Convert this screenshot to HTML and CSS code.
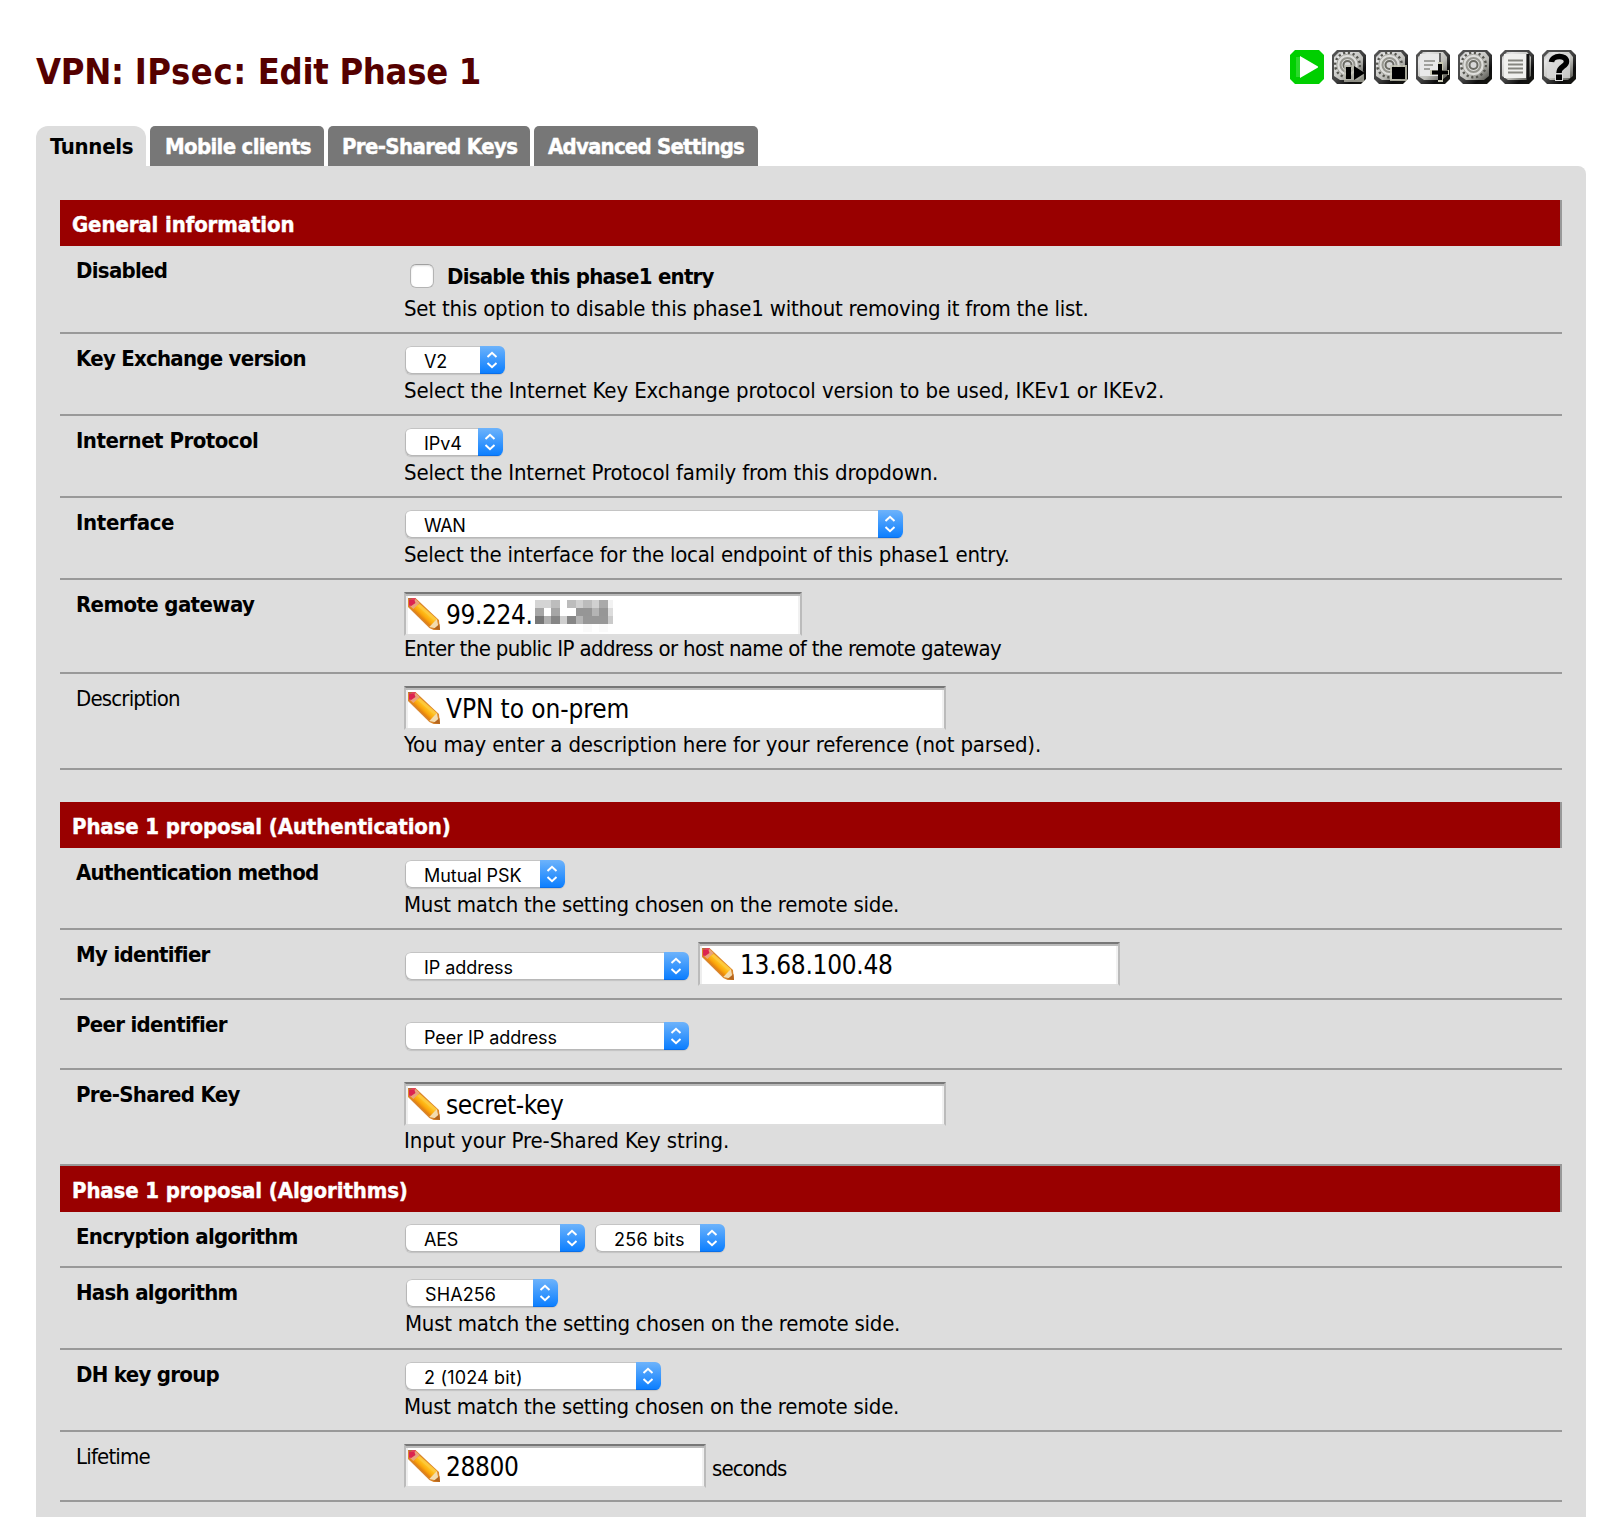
FILE: index.html
```html
<!DOCTYPE html>
<html lang="en">
<head>
<meta charset="utf-8">
<title>VPN: IPsec: Edit Phase 1</title>
<link rel="stylesheet" href="styles.css">
</head>
<body>
<svg width="0" height="0" class="defs" aria-hidden="true">
  <defs>
    <linearGradient id="metal" x1="0" y1="0" x2="1" y2="1">
      <stop offset="0" stop-color="#a9aaa8"/><stop offset=".18" stop-color="#e6e6e6"/><stop offset=".6" stop-color="#bdbdb8"/><stop offset="1" stop-color="#50504a"/>
    </linearGradient>
    <linearGradient id="rim" x1="0" y1="0" x2="1" y2="1">
      <stop offset="0" stop-color="#555"/><stop offset=".5" stop-color="#444"/><stop offset=".75" stop-color="#0c0c0c"/><stop offset="1" stop-color="#1a1a14"/>
    </linearGradient>
    <linearGradient id="wood" gradientUnits="userSpaceOnUse" x1="11" y1="19" x2="19" y2="11">
      <stop offset="0" stop-color="#e07a10"/><stop offset=".3" stop-color="#fba70c"/><stop offset=".6" stop-color="#ffc21e"/><stop offset="1" stop-color="#e98d2b"/>
    </linearGradient>
    <symbol id="tile" viewBox="0 0 34 34">
      <path d="M5 0H29L34 5V29L29 34H5L0 29V5Z" fill="url(#rim)"/>
      <path d="M7 2H27L31 7V26L26 30H8L2 26V7Z" fill="url(#metal)"/>
    </symbol>
    <symbol id="gear" viewBox="0 0 34 34">
      <circle cx="15.500" cy="15" r="12.300" fill="none" stroke="#55554f" stroke-width="2.500" stroke-dasharray="2.200 2.630"/>
      <circle cx="15.500" cy="15" r="10.700" fill="#dededb" stroke="#a4a49e" stroke-width="1"/>
      <circle cx="15.500" cy="15" r="7" fill="none" stroke="#96968f" stroke-width="2"/>
      <circle cx="15.500" cy="15" r="4" fill="#d8d8d8" stroke="#6a6a63" stroke-width="2"/>
    </symbol>
    <symbol id="pencil" viewBox="0 0 30 32" preserveAspectRatio="none">
      <path d="M0 0H7L29 22L30 32H24L20 30L0 9Z" fill="#d9862c"/>
      <path d="M7 2L28 22L21 29L1 8Z" fill="url(#wood)"/>
      <path d="M11 6L27 21L25 23L9 8Z" fill="#fdc83c"/>
      <path d="M27 21L29 31L20 29Z" fill="#f3dcae"/>
      <path d="M29.500 26L30 32L24 31Z" fill="#b5651d"/>
      <path d="M1 0H7L8.500 4L4 9L1 8Z" fill="#e2425a"/>
      <path d="M7 1L11 5L5 11L2 8Z" fill="#e9a37c"/>
      <path d="M1 2H6L7 5L3 8L1 7Z" fill="#dc2350"/>
      <path d="M0 0H4L2 2Z" fill="#b06a3c"/>
    </symbol>
    <symbol id="chevrons" viewBox="0 0 25 28">
      <path d="M7.500 11L12 6.800L16.500 11M7.500 17L12 21.200L16.500 17" fill="none" stroke="#fff" stroke-width="2"/>
    </symbol>
  </defs>
</svg>

<header class="top">
  <h1 class="title">VPN: <span class="title-part">IPsec:</span> Edit Phase 1</h1>
  <nav class="actions">
    <svg class="action" viewBox="0 0 34 34"><path d="M5 0H29L34 5V29L29 34H5L0 29V5Z" fill="#00cf00"/><path d="M6 7H10V27H6Z" fill="#2bd82b"/><path d="M10 6L28 16.500V17.500L10 28Z" fill="#fff"/></svg>
    <svg class="action" viewBox="0 0 34 34"><use href="#tile"/><use href="#gear"/><path d="M12 15H21L32 22V32H12Z" fill="#b9b9ae" opacity=".75"/><path d="M14 17H19V29H14ZM22 16L33 23L22 30Z" fill="#000"/></svg>
    <svg class="action" viewBox="0 0 34 34"><use href="#tile"/><use href="#gear"/><path d="M16 15H33V31H16Z" fill="#c9c9b8" opacity=".8"/><path d="M18 17H31V29H18Z" fill="#000"/></svg>
    <svg class="action" viewBox="0 0 34 34"><use href="#tile"/><path d="M4 4H25V26H4Z" fill="#e9e9e9"/><path d="M8 11H19M8 15H17M8 19H14" stroke="#8b8b85" stroke-width="1.500"/><path d="M24 3V13" stroke="#666" stroke-width="2"/><path d="M22 12H27V20H33V25H27V32H22V25H14V20H22Z" fill="#c9c9b4"/><path d="M16 22.500H32M24 14V30" stroke="#000" stroke-width="4"/></svg>
    <svg class="action" viewBox="0 0 34 34"><use href="#tile"/><use href="#gear"/></svg>
    <svg class="action" viewBox="0 0 34 34"><use href="#tile"/><path d="M4 4H26V28H4Z" fill="#f0f0ee"/><path d="M28 4V29" stroke="#111" stroke-width="3"/><path d="M8 10.500H23M8 14.500H23M8 18.500H23M8 22.500H23" stroke="#85857f" stroke-width="1.800"/></svg>
    <svg class="action" viewBox="0 0 34 34"><use href="#tile"/><path d="M5 4H28V28H5Z" fill="#dadada" opacity=".8"/><path d="M9.500 12C10 5 24.500 4.500 24.500 11.500C24.500 17 17 15.500 17 23" fill="none" stroke="#000" stroke-width="5.500"/><path d="M13 23.500H21V31H13Z" fill="#ddd"/><path d="M14 24.500H20V30H14Z" fill="#000"/></svg>
  </nav>
</header>

<div class="tabs">
  <a class="tab tab-active">Tunnels</a>
  <a class="tab tab-mobile">Mobile clients</a>
  <a class="tab tab-keys">Pre-Shared Keys</a>
  <a class="tab tab-advanced">Advanced Settings</a>
</div>

<main class="panel">
  <section class="group group-general">
    <h2 class="heading">General information</h2>
    <div class="row row-disabled">
      <div class="label">Disabled</div>
      <div class="value">
        <div class="line"><span class="checkbox"></span><span class="check-text">Disable this phase1 entry</span></div>
        <div class="help">Set this option to disable this phase1 without removing it from the list.</div>
      </div>
    </div>
    <div class="row row-version">
      <div class="label">Key Exchange version</div>
      <div class="value">
        <div class="select"><span class="choice">V2</span><svg class="arrows"><use href="#chevrons"/></svg></div>
        <div class="help">Select the Internet Key Exchange protocol version to be used, IKEv1 or IKEv2.</div>
      </div>
    </div>
    <div class="row row-protocol">
      <div class="label">Internet Protocol</div>
      <div class="value">
        <div class="select"><span class="choice">IPv4</span><svg class="arrows"><use href="#chevrons"/></svg></div>
        <div class="help">Select the Internet Protocol family from this dropdown.</div>
      </div>
    </div>
    <div class="row row-interface">
      <div class="label">Interface</div>
      <div class="value">
        <div class="select"><span class="choice">WAN</span><svg class="arrows"><use href="#chevrons"/></svg></div>
        <div class="help">Select the interface for the local endpoint of this phase1 entry.</div>
      </div>
    </div>
    <div class="row row-gateway">
      <div class="label">Remote gateway</div>
      <div class="value">
        <div class="field"><svg class="pencil"><use href="#pencil"/></svg><span class="entry">99.224.</span>
          <svg class="mosaic" viewBox="0 0 73 32" preserveAspectRatio="none" shape-rendering="crispEdges">
            <path d="M0 0h8v8h-8zM8 0h7v8h-7z" fill="#d4d4d4"/><path d="M15 0h8v8h-8z" fill="#bdbdbd"/><path d="M30 0h8v8h-8zM45 0h8v8h-8z" fill="#bcbcbc"/><path d="M38 0h7v8h-7zM53 0h7v8h-7z" fill="#d0d0d0"/><path d="M60 0h8v8h-8z" fill="#a9a9a9"/><path d="M68 0h5v8h-5z" fill="#f2f2f2"/><path d="M68 8h5v8h-5z" fill="#dcdcdc"/><path d="M68 16h5v8h-5z" fill="#cacaca"/>
            <path d="M0 8h8v8h-8zM15 8h8v8h-8z" fill="#a6a6a6"/><path d="M38 8h15v8h-15zM60 8h8v8h-8z" fill="#969696"/><path d="M53 8h7v8h-7z" fill="#b4b4b4"/>
            <path d="M0 16h8v8h-8z" fill="#777"/><path d="M8 16h7v8h-7z" fill="#b0b0b0"/><path d="M15 16h8v8h-8zM30 16h8v8h-8z" fill="#868686"/><path d="M23 16h7v8h-7z" fill="#cfcfcf"/><path d="M38 16h7v8h-7z" fill="#b4b4b4"/><path d="M45 16h23v8h-23z" fill="#979797"/><path d="M45 24h8v8h-8zM60 24h8v8h-8z" fill="#fafafa"/>
          </svg>
        </div>
        <div class="help">Enter the public IP address or host name of the remote gateway</div>
      </div>
    </div>
    <div class="row row-description">
      <div class="label label-optional">Description</div>
      <div class="value">
        <div class="field"><svg class="pencil"><use href="#pencil"/></svg><span class="entry">VPN to on-prem</span></div>
        <div class="help">You may enter a description here for your reference (not parsed).</div>
      </div>
    </div>
  </section>

  <section class="group">
    <h2 class="heading">Phase 1 proposal (Authentication)</h2>
    <div class="row row-method">
      <div class="label">Authentication method</div>
      <div class="value">
        <div class="select"><span class="choice">Mutual PSK</span><svg class="arrows"><use href="#chevrons"/></svg></div>
        <div class="help">Must match the setting chosen on the remote side.</div>
      </div>
    </div>
    <div class="row row-mine">
      <div class="label">My identifier</div>
      <div class="value">
        <div class="pair">
          <div class="select"><span class="choice">IP address</span><svg class="arrows"><use href="#chevrons"/></svg></div>
          <div class="field"><svg class="pencil"><use href="#pencil"/></svg><span class="entry">13.68.100.48</span></div>
        </div>
      </div>
    </div>
    <div class="row row-peer">
      <div class="label">Peer identifier</div>
      <div class="value">
        <div class="select"><span class="choice">Peer IP address</span><svg class="arrows"><use href="#chevrons"/></svg></div>
      </div>
    </div>
    <div class="row row-psk">
      <div class="label">Pre-Shared Key</div>
      <div class="value">
        <div class="field"><svg class="pencil"><use href="#pencil"/></svg><span class="entry">secret-key</span></div>
        <div class="help">Input your Pre-Shared Key string.</div>
      </div>
    </div>
  </section>

  <section class="group">
    <h2 class="heading">Phase 1 proposal (Algorithms)</h2>
    <div class="row row-encryption">
      <div class="label">Encryption algorithm</div>
      <div class="value">
        <div class="pair">
          <div class="select"><span class="choice">AES</span><svg class="arrows"><use href="#chevrons"/></svg></div>
          <div class="select select-bits"><span class="choice">256 bits</span><svg class="arrows"><use href="#chevrons"/></svg></div>
        </div>
      </div>
    </div>
    <div class="row row-hash">
      <div class="label">Hash algorithm</div>
      <div class="value">
        <div class="select"><span class="choice">SHA256</span><svg class="arrows"><use href="#chevrons"/></svg></div>
        <div class="help">Must match the setting chosen on the remote side.</div>
      </div>
    </div>
    <div class="row row-dh">
      <div class="label">DH key group</div>
      <div class="value">
        <div class="select"><span class="choice">2 (1024 bit)</span><svg class="arrows"><use href="#chevrons"/></svg></div>
        <div class="help">Must match the setting chosen on the remote side.</div>
      </div>
    </div>
    <div class="row row-lifetime">
      <div class="label label-optional">Lifetime</div>
      <div class="value">
        <div class="pair">
          <div class="field"><svg class="pencil"><use href="#pencil"/></svg><span class="entry">28800</span></div>
          <span class="unit">seconds</span>
        </div>
      </div>
    </div>
  </section>
</main>
</body>
</html>
```
FILE: styles.css
```css
* { box-sizing: border-box; }

body {
  margin: 0;
  height: 1517px;
  overflow: hidden;
  display: flex;
  flex-direction: column;
  padding: 0 28px 0 36px;
  background: #fff;
  color: #000;
  font: 22px/26px "DejaVu Sans Condensed", "DejaVu Sans", sans-serif;
  white-space: nowrap;
}

.defs { position: absolute; }

/* Page header */
.top {
  flex: none;
  height: 126px;
  display: flex;
  justify-content: space-between;
  padding: 50px 10px 0 0;
}
.title {
  margin: 1px 0 0;
  color: #500;
  font-size: 36px;
  font-weight: bold;
  line-height: 42px;
  letter-spacing: -.3px;
}
.title-part { letter-spacing: .6px; }
.actions { display: flex; gap: 8px; }
.action { width: 34px; height: 34px; }

/* Tabs */
.tabs { flex: none; display: flex; gap: 4px; height: 40px; }
.tab {
  width: 110px;
  padding: 8px 0 0 14px;
  border-radius: 5px 5px 0 0;
  background: #777;
  color: #fff;
  font-weight: bold;
  -webkit-text-stroke: .4px;
}
.tab-active {
  border-radius: 12px 12px 0 0;
  background: #ddd;
  color: #000;
  letter-spacing: -.3px;
  -webkit-text-stroke: 0;
}
.tab-mobile { width: 174px; padding-left: 15px; letter-spacing: -.68px; }
.tab-keys { width: 202px; padding-left: 14px; letter-spacing: -.64px; }
.tab-advanced { width: 224px; letter-spacing: -.79px; }

/* Panel and sections */
.panel {
  flex: 1;
  padding: 34px 24px 0;
  border-radius: 0 8px 0 0;
  background: #ddd;
}
.group-general { margin-bottom: 32px; }
.heading {
  margin: 0;
  height: 46px;
  padding: 12px 0 0 12px;
  border-right: 2px solid #999;
  background: #900;
  color: #fff;
  font-size: 22px;
  line-height: 26px;
  letter-spacing: -.12px;
  -webkit-text-stroke: .4px;
}
.row {
  display: grid;
  grid-template-columns: 344px 1fr;
  height: 82px;
  border-bottom: 2px solid #999;
}
.label { padding: 12px 0 0 16px; font-weight: bold; letter-spacing: -.7px; }
.label-optional { font-weight: normal; letter-spacing: -.82px; }
.value { padding-top: 12px; }
.help { margin: 4px 0 0; letter-spacing: -.18px; }
.field + .help { margin-top: 2px; }
.pair { display: flex; }

/* Controls */
.line { display: flex; padding-left: 6px; }
.checkbox {
  width: 24px;
  height: 24px;
  margin-top: 6px;
  border: 1px solid #b4b4b4;
  border-top-color: #a0a0a0;
  border-radius: 6px;
  background: #fff;
  box-shadow: inset 0 1px 2px #ddd;
}
.check-text { margin: 6px 0 0 13px; font-weight: bold; letter-spacing: -.76px; }
.select {
  display: flex;
  justify-content: space-between;
  width: 100px;
  height: 28px;
  margin-left: 1px;
  padding-left: 19px;
  overflow: hidden;
  border-radius: 6px;
  background: #fff;
  box-shadow: inset 0 1px #c4c4c4, inset 1px -1px #b8b8b8, 0 1px 1px rgba(0, 0, 0, .12);
  font: 18px/28px Inter, "Liberation Sans", sans-serif;
}
.choice { padding-top: 2px; line-height: 26px; transform: translateY(1px); letter-spacing: -.05px; }
.arrows {
  width: 25px;
  height: 28px;
  background: linear-gradient(#6db3fb, #097dff);
  box-shadow: inset 0 -1px #0a6ee8;
}
.field {
  display: flex;
  width: 542px;
  height: 44px;
  border: 2px solid #bbb;
  border-top-color: #777;
  border-bottom-color: #dedede;
  background: #fff;
  box-shadow: inset 0 2px #bbb, inset 2px 0 #eee, inset -2px 0 #f1f1f1;
  font-size: 26px;
  line-height: 30px;
}
.pencil { width: 32px; height: 32px; margin: 4px 0 0 2px; }
.entry { margin: 6px 0 0 6px; letter-spacing: -.1px; }
.mosaic { width: 78px; height: 32px; margin: 6px 0 0 3px; }
.unit { margin: 12px 0 0 6px; letter-spacing: -.93px; }

/* Individual rows */
.row-disabled { height: 88px; }
.row-disabled .help { margin-top: 6px; letter-spacing: -.22px; }
.row-version .label { letter-spacing: -.74px; }
.row-version .help { letter-spacing: -.12px; }
.row-protocol .label { letter-spacing: -.51px; }
.row-protocol .help { letter-spacing: -.17px; }
.row-protocol .select { width: 98px; }
.row-interface .label { letter-spacing: -.34px; }
.row-interface .help { letter-spacing: -.24px; }
.row-interface .select { width: 498px; }
.row-interface .choice { letter-spacing: -.4px; }
.row-gateway { height: 94px; }
.row-gateway .label { letter-spacing: -.62px; }
.row-gateway .field { width: 398px; }
.row-gateway .entry { letter-spacing: -.4px; }
.row-gateway .field + .help { margin-top: 0; letter-spacing: -.63px; }
.row-description { height: 96px; }
.row-description .help { letter-spacing: -.16px; }
.row-method .label { letter-spacing: -.74px; }
.row-method .select { width: 160px; }
.row-method .help, .row-hash .help, .row-dh .help { letter-spacing: -.25px; }
.row-mine { height: 70px; }
.row-mine .select { width: 284px; margin: 10px 9px 0 1px; }
.row-mine .field { width: 422px; }
.row-mine .entry { letter-spacing: -.3px; }
.row-peer { height: 70px; }
.row-peer .select { width: 284px; margin-top: 10px; }
.row-psk { height: 96px; }
.row-psk .label { letter-spacing: -.67px; }
.row-psk .entry { letter-spacing: -.38px; }
.row-psk .help { letter-spacing: -.08px; }
.row-encryption { height: 56px; }
.row-encryption .select { width: 180px; }
.row-encryption .select-bits { width: 130px; margin-left: 10px; }
.row-encryption .choice { letter-spacing: -.2px; }
.row-encryption .select-bits .choice { letter-spacing: .25px; }
.row-hash .value { padding: 11px 0 0 1px; }
.row-hash .select { width: 152px; }
.row-hash .choice { letter-spacing: .1px; }
.row-dh .select { width: 256px; }
.row-dh .choice { letter-spacing: .18px; }
.row-lifetime { height: 70px; }
.row-lifetime .field { width: 302px; }
.row-lifetime .entry { letter-spacing: -.4px; }
```
